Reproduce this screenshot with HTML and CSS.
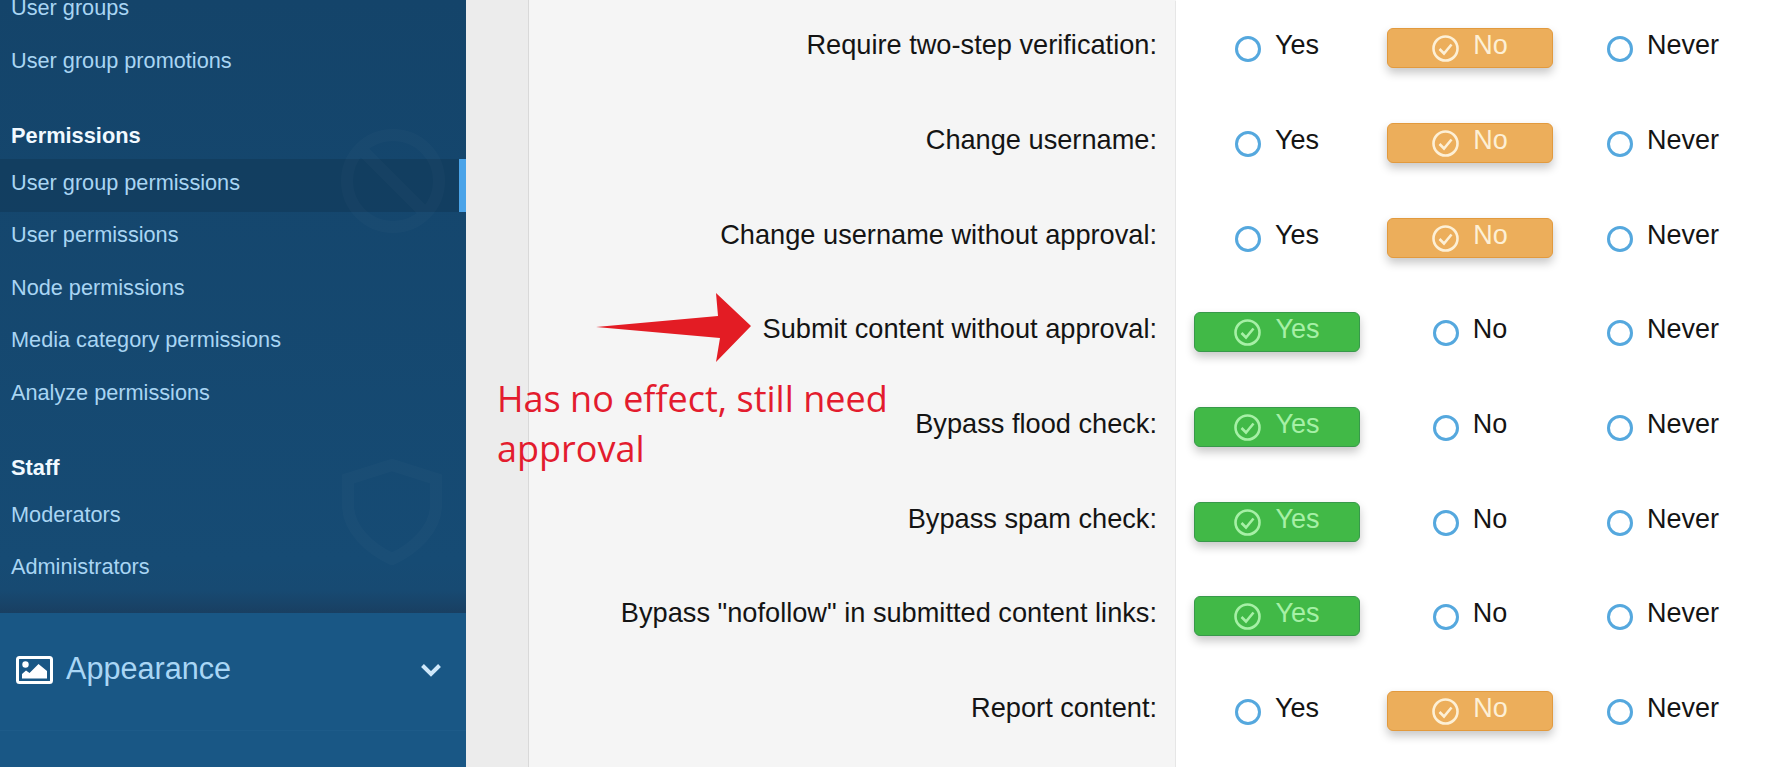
FILE: index.html
```html
<!DOCTYPE html>
<html lang="en">
<head>
  <meta charset="UTF-8" />
  <title>User group permissions</title>
  <link rel="stylesheet" href="styles.css">
</head>
<body>
  <aside class="sidebar">
    <div class="nav-area">
      <svg class="watermark ban" viewBox="0 0 106 106"><circle cx="53" cy="53" r="46" /><path d="M20 20L86 86" /></svg>
      <svg class="watermark shield" viewBox="0 0 100 106"><path d="M50 6L94 20V46C94 70 72 90 50 100C28 90 6 70 6 46V20Z" /></svg>

      <div class="nav-group first">
        <a class="nav-link">User groups</a>
        <a class="nav-link">User group promotions</a>
      </div>
      <div class="nav-group">
        <h3>Permissions</h3>
        <a class="nav-link active">User group permissions</a>
        <a class="nav-link">User permissions</a>
        <a class="nav-link">Node permissions</a>
        <a class="nav-link">Media category permissions</a>
        <a class="nav-link">Analyze permissions</a>
      </div>
      <div class="nav-group">
        <h3>Staff</h3>
        <a class="nav-link">Moderators</a>
        <a class="nav-link">Administrators</a>
      </div>
    </div>
    <div class="nav-section">
      <svg class="section-icon" viewBox="0 0 37 28">
        <rect x="1.5" y="1.5" width="34" height="25" rx="2" fill="none" stroke="#fff" stroke-width="3" />
        <circle cx="9.5" cy="8.5" r="3.2" fill="#fff" />
        <path d="M6 22.5V18L10 14.5L13.5 17L22.5 8L31 15V22.5Z" fill="#fff" />
      </svg>
      <span class="section-title">Appearance</span>
      <svg class="chevron" viewBox="0 0 22 14"><path d="M2.5 2.5L11 11L19.5 2.5" /></svg>
    </div>
  </aside>

  <main class="content">
    <div class="gutter"></div>
    <div class="form">

      <div class="row">
        <div class="label">Require two-step verification:</div>
        <div class="choices">
          <div class="choice"><i class="radio"></i><span>Yes</span></div>
          <div class="choice picked no"><svg class="tick" viewBox="0 0 27 27"><circle cx="13.5" cy="13.5" r="12" /><path d="M7.5 14L12 18.500L19.500 9.500" /></svg><span>No</span></div>
          <div class="choice"><i class="radio"></i><span>Never</span></div>
        </div>
      </div>

      <div class="row">
        <div class="label">Change username:</div>
        <div class="choices">
          <div class="choice"><i class="radio"></i><span>Yes</span></div>
          <div class="choice picked no"><svg class="tick" viewBox="0 0 27 27"><circle cx="13.5" cy="13.5" r="12" /><path d="M7.5 14L12 18.500L19.500 9.500" /></svg><span>No</span></div>
          <div class="choice"><i class="radio"></i><span>Never</span></div>
        </div>
      </div>

      <div class="row">
        <div class="label">Change username without approval:</div>
        <div class="choices">
          <div class="choice"><i class="radio"></i><span>Yes</span></div>
          <div class="choice picked no"><svg class="tick" viewBox="0 0 27 27"><circle cx="13.5" cy="13.5" r="12" /><path d="M7.5 14L12 18.500L19.500 9.500" /></svg><span>No</span></div>
          <div class="choice"><i class="radio"></i><span>Never</span></div>
        </div>
      </div>

      <div class="row">
        <div class="label">Submit content without approval:</div>
        <div class="choices">
          <div class="choice picked yes"><svg class="tick" viewBox="0 0 27 27"><circle cx="13.5" cy="13.5" r="12" /><path d="M7.5 14L12 18.500L19.500 9.500" /></svg><span>Yes</span></div>
          <div class="choice"><i class="radio"></i><span>No</span></div>
          <div class="choice"><i class="radio"></i><span>Never</span></div>
        </div>
      </div>

      <div class="row">
        <div class="label">Bypass flood check:</div>
        <div class="choices">
          <div class="choice picked yes"><svg class="tick" viewBox="0 0 27 27"><circle cx="13.5" cy="13.5" r="12" /><path d="M7.5 14L12 18.500L19.500 9.500" /></svg><span>Yes</span></div>
          <div class="choice"><i class="radio"></i><span>No</span></div>
          <div class="choice"><i class="radio"></i><span>Never</span></div>
        </div>
      </div>

      <div class="row">
        <div class="label">Bypass spam check:</div>
        <div class="choices">
          <div class="choice picked yes"><svg class="tick" viewBox="0 0 27 27"><circle cx="13.5" cy="13.5" r="12" /><path d="M7.5 14L12 18.500L19.500 9.500" /></svg><span>Yes</span></div>
          <div class="choice"><i class="radio"></i><span>No</span></div>
          <div class="choice"><i class="radio"></i><span>Never</span></div>
        </div>
      </div>

      <div class="row">
        <div class="label">Bypass "nofollow" in submitted content links:</div>
        <div class="choices">
          <div class="choice picked yes"><svg class="tick" viewBox="0 0 27 27"><circle cx="13.5" cy="13.5" r="12" /><path d="M7.5 14L12 18.500L19.500 9.500" /></svg><span>Yes</span></div>
          <div class="choice"><i class="radio"></i><span>No</span></div>
          <div class="choice"><i class="radio"></i><span>Never</span></div>
        </div>
      </div>

      <div class="row">
        <div class="label">Report content:</div>
        <div class="choices">
          <div class="choice"><i class="radio"></i><span>Yes</span></div>
          <div class="choice picked no"><svg class="tick" viewBox="0 0 27 27"><circle cx="13.5" cy="13.5" r="12" /><path d="M7.5 14L12 18.500L19.500 9.500" /></svg><span>No</span></div>
          <div class="choice"><i class="radio"></i><span>Never</span></div>
        </div>
      </div>

      <div class="row">
        <div class="label"></div>
        <div class="choices"></div>
      </div>
    </div>

    <!-- screenshot annotation drawn on top of the form -->
    <svg class="arrow" viewBox="0 0 156 70"><polygon points="0,34 122,23 120,0 155,33 120,69 124,45" /></svg>
    <p class="note">Has no effect, still need approval</p>
  </main>
</body>
</html>
```

FILE: styles.css
```css
* {
  box-sizing: border-box;
}

html,
body {
  height: 100%;
}

body {
  display: flex;
  margin: 0;
  overflow: hidden;
  font-family: "Liberation Sans", Arial, sans-serif;
  color: #141414;
  background-color: #fff;
}

/* sidebar */
.sidebar {
  display: flex;
  flex-direction: column;
  flex: 0 0 466px;
  height: 767px;
  overflow: hidden;
  background-color: #195785;
}

.nav-area {
  position: relative;
  flex: 0 0 613px;
  padding-top: 1px;
  overflow: hidden;
  background: linear-gradient(to bottom, #14446a 0, #164b74 560px, #174a72 590px, #193f62 613px);
}

.watermark {
  position: absolute;
  fill: none;
  stroke: #fff;
  stroke-width: 12;
  opacity: 0.016;
}

.ban {
  left: 340px;
  top: 128px;
  width: 106px;
  height: 106px;
}

.shield {
  left: 342px;
  top: 459px;
  width: 100px;
  height: 106px;
}

.nav-group {
  margin-top: 34px;
}

.nav-group.first {
  margin-top: -16.4px;
}

.nav-group h3 {
  margin: 0;
  padding: 0 11px 10px;
  font-size: 21.8px;
  line-height: 26px;
  font-weight: bold;
  color: #f1f9ff;
}

.nav-link {
  display: flex;
  align-items: center;
  height: 52.4px;
  padding: 0 11px 5px;
  font-size: 21.7px;
  color: #a9d5f3;
}

.nav-link.active {
  background-color: rgba(17, 56, 88, 0.6);
  border-right: 7px solid #4aa3e8;
}

.nav-section {
  display: flex;
  align-items: center;
  flex: 0 0 118px;
  padding: 0 24px 6px 16px;
  border-bottom: 1px solid #1d5b89;
}

.section-icon {
  width: 37px;
  height: 28px;
  margin-top: 2px;
}

.section-title {
  flex: 1;
  margin-left: 13px;
  font-size: 30.6px;
  color: #a9d6f5;
}

.chevron {
  width: 22px;
  height: 14px;
  margin-top: 3px;
  fill: none;
  stroke: #cfe8fa;
  stroke-width: 4;
}

/* form */
.content {
  position: relative;
  display: flex;
  flex: 1;
  height: 767px;
  overflow: hidden;
}

.gutter {
  flex: 0 0 63px;
  background-color: #ececec;
  border-right: 1px solid #d9d9d9;
}

.form {
  flex: 1;
  padding-top: 1px;
  background: linear-gradient(to right, #f5f5f5 647px, #fff 647px);
}

.row {
  display: flex;
  height: 94.67px;
}

.label {
  display: flex;
  align-items: center;
  justify-content: flex-end;
  flex: 0 0 647px;
  padding: 0 18px 6px 0;
  font-size: 27.2px;
  background-color: #f5f5f5;
  border-right: 1px solid #e6e6e6;
}

.choices {
  display: flex;
  align-items: center;
  gap: 27px;
  flex: 1;
  padding-left: 18px;
}

.choice {
  display: flex;
  align-items: center;
  justify-content: center;
  gap: 14px;
  width: 166px;
  height: 40px;
  font-size: 27px;
}

.choice span {
  margin-bottom: 5px;
}

.radio {
  width: 26px;
  height: 26px;
  margin-top: 2px;
  border: 3px solid #55a8de;
  border-radius: 50%;
  background-color: #fff;
}

.picked {
  border: 1px solid;
  border-radius: 6px;
  box-shadow: 0 5px 10px rgba(0, 0, 0, 0.22);
}

.yes {
  color: #a6f0a6;
  background-color: #41b947;
  border-color: #37994a;
}

.no {
  color: #fdf0d6;
  background-color: #ecae5b;
  border-color: #e29a3e;
}

.tick {
  width: 27px;
  height: 27px;
  margin-top: 1px;
  fill: none;
  stroke: currentColor;
  stroke-width: 2.6;
}

/* annotation */
.arrow {
  position: absolute;
  left: 130px;
  top: 293px;
  width: 156px;
  height: 70px;
  fill: #e31c24;
}

.note {
  position: absolute;
  left: 31px;
  top: 374px;
  width: 410px;
  margin: 0;
  font-family: "Open Sans", sans-serif;
  font-size: 36px;
  line-height: 50px;
  color: #e31c2e;
}
```
